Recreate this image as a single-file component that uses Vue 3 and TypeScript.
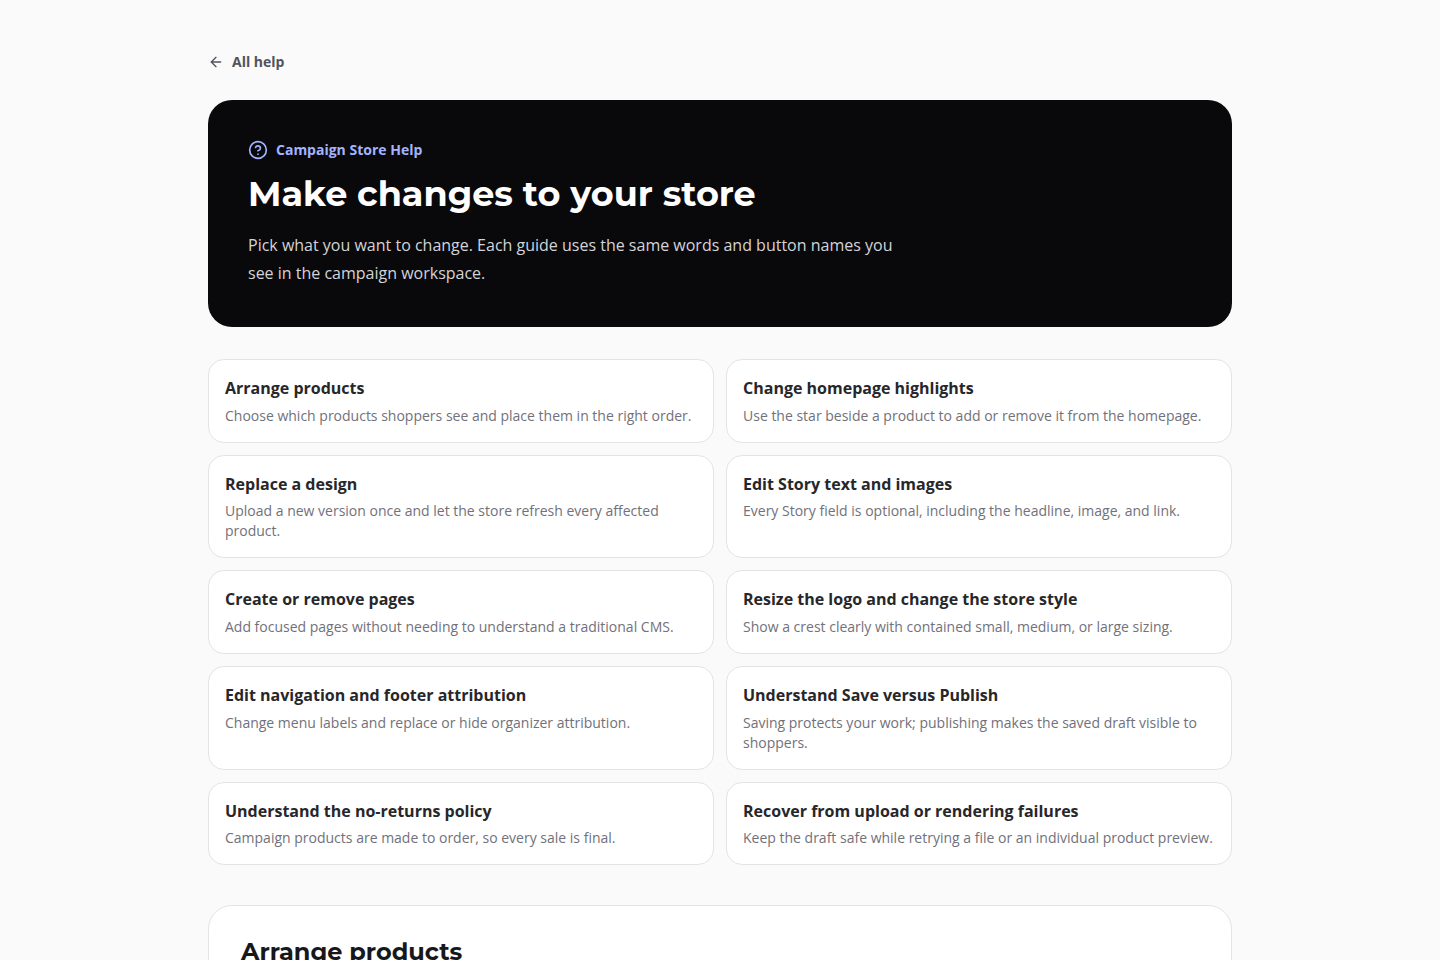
<script setup lang="ts">
interface Guide {
  id: string
  title: string
  summary: string
}

const guides: Guide[] = [
  { id: 'arrange-products', title: 'Arrange products', summary: 'Choose which products shoppers see and place them in the right order.' },
  { id: 'homepage-highlights', title: 'Change homepage highlights', summary: 'Use the star beside a product to add or remove it from the homepage.' },
  { id: 'replace-design', title: 'Replace a design', summary: 'Upload a new version once and let the store refresh every affected product.' },
  { id: 'edit-story', title: 'Edit Story text and images', summary: 'Every Story field is optional, including the headline, image, and link.' },
  { id: 'pages', title: 'Create or remove pages', summary: 'Add focused pages without needing to understand a traditional CMS.' },
  { id: 'logo-style', title: 'Resize the logo and change the store style', summary: 'Show a crest clearly with contained small, medium, or large sizing.' },
  { id: 'navigation', title: 'Edit navigation and footer attribution', summary: 'Change menu labels and replace or hide organizer attribution.' },
  { id: 'save-publish', title: 'Understand Save versus Publish', summary: 'Saving protects your work; publishing makes the saved draft visible to shoppers.' },
  { id: 'no-returns', title: 'Understand the no-returns policy', summary: 'Campaign products are made to order, so every sale is final.' },
  { id: 'recover', title: 'Recover from upload or rendering failures', summary: 'Keep the draft safe while retrying a file or an individual product preview.' },
]
</script>

<template>
  <main class="page">
    <div class="container">
      <a class="back" href="#help">
        <svg class="back-icon" viewBox="0 0 24 24" aria-hidden="true">
          <path d="m12 19-7-7 7-7" />
          <path d="M19 12H5" />
        </svg>
        All help
      </a>

      <header class="hero">
        <p class="eyebrow">
          <svg class="eyebrow-icon" viewBox="0 0 24 24" aria-hidden="true">
            <circle cx="12" cy="12" r="10" />
            <path d="M9.09 9a3 3 0 0 1 5.83 1c0 2-3 3-3 3" />
            <path d="M12 17h.01" />
          </svg>
          Campaign Store Help
        </p>
        <h1>Make changes to your store</h1>
        <p class="intro">
          Pick what you want to change. Each guide uses the same words and button names you see in the campaign workspace.
        </p>
      </header>

      <nav class="guides" aria-label="Guides">
        <a v-for="guide in guides" :key="guide.id" class="card" :href="`#${guide.id}`">
          <span class="card-title">{{ guide.title }}</span>
          <span class="card-summary">{{ guide.summary }}</span>
        </a>
      </nav>

      <section id="arrange-products" class="article">
        <h2>Arrange products</h2>
      </section>
    </div>
  </main>
</template>

<style>
html,
body {
  margin: 0;
  background: #fafafa;
}
</style>

<style scoped>
.page {
  padding: 52px 24px;
  color: #18181b;
  font-family: "Open Sans", "Noto Sans", sans-serif;
  font-size: 16px;
  line-height: 1.6;
  -webkit-font-smoothing: antialiased;
}

.container {
  max-width: 1024px;
  margin: 0 auto;
}

svg {
  flex: none;
  fill: none;
  stroke: currentColor;
  stroke-width: 2;
  stroke-linecap: round;
  stroke-linejoin: round;
}

.back {
  display: flex;
  align-items: center;
  gap: 8px;
  width: fit-content;
  margin-bottom: 28px;
  color: #52525b;
  font-size: 14px;
  font-weight: 700;
  line-height: 20px;
  text-decoration: none;
}

.back-icon {
  width: 16px;
  height: 16px;
}

.hero {
  padding: 40px;
  border-radius: 24px;
  background: #09090b;
  color: #ffffff;
}

.eyebrow {
  display: flex;
  align-items: center;
  gap: 8px;
  margin: 0 0 12px;
  color: #a3b3ff;
  font-size: 14px;
  font-weight: 700;
  line-height: 20px;
}

.eyebrow-icon {
  width: 20px;
  height: 20px;
}

h1,
h2 {
  margin: 0;
  font-family: Montserrat, "Open Sans", sans-serif;
  font-weight: 700;
  line-height: 1.2;
}

h1 {
  font-size: 35px;
  line-height: 1.235;
}

.intro {
  max-width: 672px;
  margin: 16px 0 0;
  color: #d4d4d8;
  line-height: 28px;
}

.guides {
  display: grid;
  grid-template-columns: repeat(2, minmax(0, 1fr));
  gap: 12px;
  margin-top: 32px;
}

.card {
  display: flex;
  flex-direction: column;
  gap: 4px;
  padding: 16px;
  border: 1px solid #e4e4e7;
  border-radius: 16px;
  background: #ffffff;
  text-decoration: none;
}

.card-title {
  color: #27272a;
  font-weight: 700;
}

.card-summary {
  color: #71717b;
  font-size: 14px;
  line-height: 20px;
}

.article {
  margin-top: 40px;
  padding: 32px;
  border: 1px solid #e4e4e7;
  border-radius: 24px;
  background: #ffffff;
}

h2 {
  font-size: 24px;
}

@media (max-width: 640px) {
  .guides {
    grid-template-columns: minmax(0, 1fr);
  }
}
</style>
